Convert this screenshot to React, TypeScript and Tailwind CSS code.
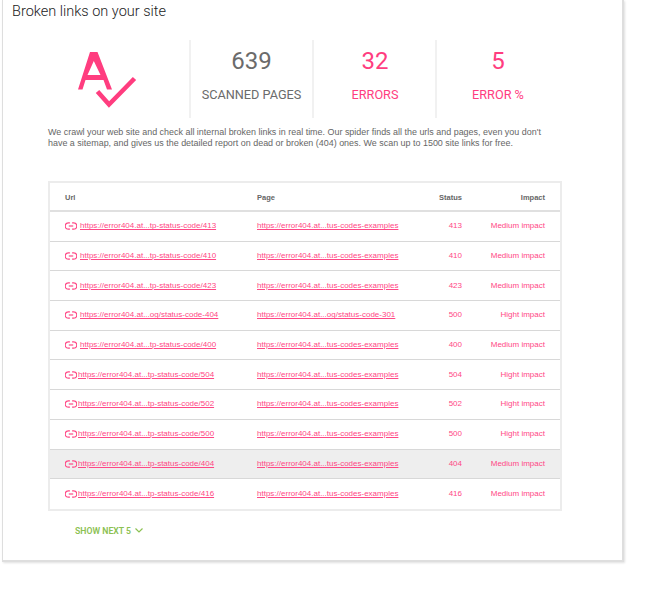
import React from 'react';

const ROWS = [
  { url: 'https://error404.at...tp-status-code/413', page: 'https://error404.at...tus-codes-examples', status: '413', impact: 'Medium impact', gap: 'ml-[3px]' },
  { url: 'https://error404.at...tp-status-code/410', page: 'https://error404.at...tus-codes-examples', status: '410', impact: 'Medium impact', gap: 'ml-[3px]' },
  { url: 'https://error404.at...tp-status-code/423', page: 'https://error404.at...tus-codes-examples', status: '423', impact: 'Medium impact', gap: 'ml-[3px]' },
  { url: 'https://error404.at...og/status-code-404', page: 'https://error404.at...og/status-code-301', status: '500', impact: 'Hight impact', gap: 'ml-[3px]' },
  { url: 'https://error404.at...tp-status-code/400', page: 'https://error404.at...tus-codes-examples', status: '400', impact: 'Medium impact', gap: 'ml-[3px]' },
  { url: 'https://error404.at...tp-status-code/504', page: 'https://error404.at...tus-codes-examples', status: '504', impact: 'Hight impact', gap: 'ml-px' },
  { url: 'https://error404.at...tp-status-code/502', page: 'https://error404.at...tus-codes-examples', status: '502', impact: 'Hight impact', gap: 'ml-px' },
  { url: 'https://error404.at...tp-status-code/500', page: 'https://error404.at...tus-codes-examples', status: '500', impact: 'Hight impact', gap: 'ml-px' },
  { url: 'https://error404.at...tp-status-code/404', page: 'https://error404.at...tus-codes-examples', status: '404', impact: 'Medium impact', gap: 'ml-px', active: true },
  { url: 'https://error404.at...tp-status-code/416', page: 'https://error404.at...tus-codes-examples', status: '416', impact: 'Medium impact', gap: 'ml-px' },
];

const LinkIcon = () => (
  <svg width="12" height="8" viewBox="0 0 12 8" fill="none" stroke="#ff4785" strokeWidth="1.2" className="shrink-0">
    <path d="M4.9 0.8H3.4a3.2 3.2 0 0 0 0 6.4h1.5" />
    <path d="M7.1 0.8h1.5a3.2 3.2 0 0 1 0 6.4H7.1" />
    <path d="M3.8 4h4.4" />
  </svg>
);

const Logo = () => (
  <svg width="64" height="60" viewBox="0 0 64 60" fill="none">
    <path
      fill="#ff3d7f"
      fillRule="evenodd"
      d="M3 39.5 15 2h7.5L37 39.5h-5L28.5 30h-18l-3 9.5ZM18.8 11 12.5 25h13Z"
    />
    <path d="M22.5 41.5 34 54.5 59.5 28.5" stroke="#ff3d7f" strokeWidth="4.6" />
  </svg>
);

const Stat = ({ value, label, pink }: { value: string; label: string; pink?: boolean }) => (
  <div className={`w-[123px] h-[78px] border-l-2 border-[#f1f1f1] flex flex-col items-center font-['Roboto',sans-serif] ${pink ? 'text-[#ff3d7f] pl-px' : 'text-[#6b6b6b]'}`}>
    <div className="mt-[6px] h-[30px] text-[24px] leading-[30px]">{value}</div>
    <div className="mt-[11px] text-[12.7px] leading-[16px] whitespace-nowrap">{label}</div>
  </div>
);

export default function App() {
  return (
    <div className="w-[655px] h-[596px] bg-white overflow-hidden">
      <div className="ml-[2px] w-[622px] h-[562px] bg-white border-r-2 border-b-2 border-l border-[#dedede] shadow-[1px_1px_2px_rgba(0,0,0,0.12)] flex flex-col">
        <h1 className="ml-[9px] mt-[3px] h-[18px] text-[14.5px] leading-[18px] font-light text-[#222222] font-['Roboto',sans-serif]">Broken links on your site</h1>

        <div className="mt-[19px] flex">
          <div className="w-[186px] pl-[72px] pt-[10px]">
            <Logo />
          </div>
          <Stat value="639" label="SCANNED PAGES" />
          <Stat value="32" label="ERRORS" pink />
          <Stat value="5" label="ERROR %" pink />
        </div>

        <p className="ml-[45px] mt-[9px] w-[510px] text-[8.95px] leading-[11px] text-[#666666] font-['Liberation_Sans',sans-serif]">
          We crawl your web site and check all internal broken links in real time. Our spider finds all the urls and pages, even you don't have a sitemap, and gives us the detailed report on dead or broken (404) ones. We scan up to 1500 site links for free.
        </p>

        <div className="ml-[45px] mt-[32px] w-[514px] border-2 border-[#ececec] font-['Liberation_Sans',sans-serif] text-[8px]">
          <div className="h-[29px] pt-[3px] flex items-center text-[#666666] font-bold text-[7.5px] border-b-2 border-[#e0e0e0]">
            <div className="w-[207px] pl-[15px]">Url</div>
            <div className="w-[159px]">Page</div>
            <div className="w-[46px] text-right">Status</div>
            <div className="w-[83px] text-right">Impact</div>
          </div>
          {ROWS.map((row, i) => (
            <div
              key={i}
              className={`h-[29.7px] flex items-center text-[#ff4785] ${i < ROWS.length - 1 ? 'border-b border-[#d8d8d8]' : ''} ${row.active ? 'bg-[#eeeeee]' : ''}`}
            >
              <div className="w-[207px] pl-[15px] flex items-center">
                <LinkIcon />
                <span className={`${row.gap} underline whitespace-nowrap`}>{row.url}</span>
              </div>
              <div className="w-[159px] underline whitespace-nowrap">{row.page}</div>
              <div className="w-[46px] text-right">{row.status}</div>
              <div className="w-[83px] text-right">{row.impact}</div>
            </div>
          ))}
        </div>

        <div className="ml-[72px] mt-[14px] flex items-center gap-[4px] text-[8.7px] leading-[12px] font-semibold text-[#8cc152] font-['Roboto',sans-serif]">
          <span>SHOW NEXT 5</span>
          <svg width="8" height="5" viewBox="0 0 8 5" fill="none" stroke="#8cc152" strokeWidth="1.2">
            <path d="M0.5 0.5 4 4 7.5 0.5" />
          </svg>
        </div>
      </div>
    </div>
  );
}
